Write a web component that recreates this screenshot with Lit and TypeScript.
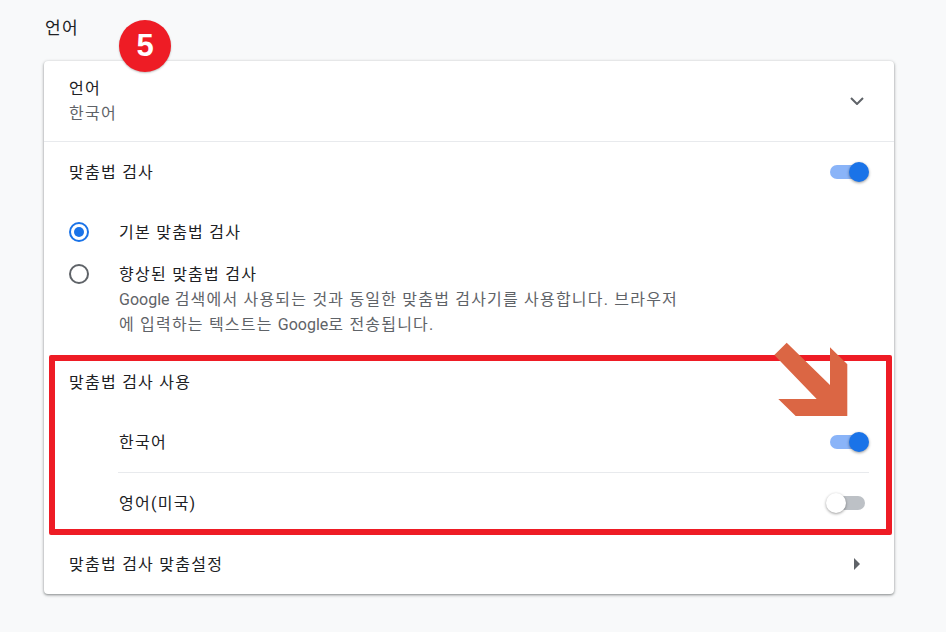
import { LitElement, html, css, svg } from 'lit';
import { customElement, property } from 'lit/decorators.js';

@customElement('fc-toggle')
class FcToggle extends LitElement {
  @property({ type: Boolean, reflect: true }) checked = false;

  static styles = css`
    :host {
      display: block;
      position: relative;
      width: 43px;
      height: 20px;
    }
    .bar {
      position: absolute;
      top: 3px;
      left: 4px;
      width: 35px;
      height: 14px;
      border-radius: 7px;
      background: #bdc1c6;
    }
    .knob {
      position: absolute;
      top: 0;
      left: 0;
      width: 20px;
      height: 20px;
      border-radius: 50%;
      background: #fff;
      box-shadow: 0 1px 3px rgba(0, 0, 0, 0.4);
    }
    :host([checked]) .bar {
      background: #8ab4f8;
    }
    :host([checked]) .knob {
      left: 23px;
      background: #1a73e8;
    }
  `;

  render() {
    return html`<div class="bar"></div><div class="knob"></div>`;
  }
}

@customElement('app-root')
class AppRoot extends LitElement {
  static styles = css`
    :host {
      display: block;
      position: relative;
      width: 946px;
      height: 632px;
      overflow: hidden;
      background: #f8f9fa;
      color: #202124;
      font-family: Roboto, 'Noto Sans CJK KR', 'Liberation Sans', sans-serif;
      font-size: 16px;
      letter-spacing: 1.25px;
    }
    .page {
      padding: 15px 52px 0 44px;
    }
    h2 {
      margin: 0 0 20px 1px;
      height: 26px;
      line-height: 26px;
      font-size: 17px;
      font-weight: 400;
    }
    .card {
      background: #fff;
      border-radius: 4px;
      box-shadow: 0 1px 2px rgba(60, 64, 67, 0.4), 0 1px 3px 1px rgba(60, 64, 67, 0.2);
    }
    .row {
      display: flex;
      align-items: center;
      justify-content: space-between;
      padding: 0 25px;
    }
    .label {
      padding-bottom: 2px;
    }
    .lang {
      height: 80px;
      border-bottom: 1px solid #e8eaed;
      padding-right: 30px;
    }
    .lang-text {
      display: flex;
      flex-direction: column;
      gap: 1px;
      line-height: 24px;
    }
    .sub {
      color: #5f6368;
    }
    .spell {
      height: 60px;
    }
    .options {
      padding: 0 25px;
      display: flex;
      flex-direction: column;
    }
    .option {
      display: flex;
      gap: 30px;
    }
    .option.basic {
      align-items: center;
      height: 60px;
    }
    .option.better {
      margin-top: -8px;
      height: 100px;
    }
    .radio {
      box-sizing: border-box;
      flex: none;
      width: 20px;
      height: 20px;
      border: 2px solid #5f6368;
      border-radius: 50%;
      display: flex;
      align-items: center;
      justify-content: center;
    }
    .radio.on {
      border-color: #1a73e8;
    }
    .radio.on::after {
      content: '';
      width: 10px;
      height: 10px;
      border-radius: 50%;
      background: #1a73e8;
    }
    .better .radio {
      margin-top: 10px;
    }
    .better-text {
      line-height: 25px;
      padding-top: 8px;
    }
    .desc {
      width: 570px;
      letter-spacing: 1.2px;
      color: #5f6368;
    }
    .latin {
      letter-spacing: 0;
    }
    .use {
      height: 54px;
      margin-bottom: 4px;
    }
    .use .label {
      padding-bottom: 0;
    }
    .lang-list {
      margin-left: 74px;
      padding-right: 25px;
    }
    .lang-item {
      display: flex;
      align-items: center;
      justify-content: space-between;
      height: 60px;
    }
    .lang-item + .lang-item {
      border-top: 1px solid #e8eaed;
    }
    .lang-item .label {
      margin-left: 1px;
    }
    .settings {
      height: 61px;
      padding-right: 34px;
    }
    .mark {
      position: absolute;
      box-sizing: border-box;
      left: 49px;
      top: 355px;
      width: 843px;
      height: 180px;
      border: 6px solid #ee1c25;
      border-radius: 2px;
    }
    .badge {
      position: absolute;
      left: 119px;
      top: 20px;
      width: 52px;
      height: 52px;
      border-radius: 50%;
      background: #ee1c25;
      box-shadow: 0 1px 2px rgba(0, 0, 0, 0.25);
      color: #fff;
      font-family: 'Liberation Sans', sans-serif;
      font-size: 31px;
      font-weight: 700;
      letter-spacing: 0;
      line-height: 52px;
      text-align: center;
    }
    .arrow {
      position: absolute;
      left: 770px;
      top: 340px;
    }
  `;

  private chevron() {
    return html`<svg width="14" height="8" viewBox="0 0 14 8">
      ${svg`<path d="M1 1l6 6 6-6" fill="none" stroke="#5f6368" stroke-width="2" />`}
    </svg>`;
  }

  private caret() {
    return html`<svg width="6" height="12" viewBox="0 0 6 12">
      ${svg`<path d="M0 0l6 6-6 6z" fill="#5f6368" />`}
    </svg>`;
  }

  render() {
    return html`
      <div class="page">
        <h2>언어</h2>
        <div class="card">
          <div class="row lang">
            <div class="lang-text">
              <span>언어</span>
              <span class="sub">한국어</span>
            </div>
            ${this.chevron()}
          </div>
          <div class="row spell">
            <span class="label">맞춤법 검사</span>
            <fc-toggle checked></fc-toggle>
          </div>
          <div class="options">
            <div class="option basic">
              <div class="radio on"></div>
              <span class="label">기본 맞춤법 검사</span>
            </div>
            <div class="option better">
              <div class="radio"></div>
              <div class="better-text">
                <div>향상된 맞춤법 검사</div>
                <div class="desc"><span class="latin">Google</span> 검색에서 사용되는 것과 동일한 맞춤법 검사기를 사용합니다. 브라우저에 입력하는 텍스트는 <span class="latin">Google</span>로 전송됩니다.</div>
              </div>
            </div>
          </div>
          <div class="row use"><span class="label">맞춤법 검사 사용</span></div>
          <div class="lang-list">
            <div class="lang-item">
              <span class="label">한국어</span>
              <fc-toggle checked></fc-toggle>
            </div>
            <div class="lang-item">
              <span class="label">영어(미국)</span>
              <fc-toggle></fc-toggle>
            </div>
          </div>
          <div class="row settings">
            <span class="label">맞춤법 검사 맞춤설정</span>
            ${this.caret()}
          </div>
        </div>
      </div>
      <div class="mark"></div>
      <svg class="arrow" width="80" height="80" viewBox="770 340 80 80">
        ${svg`<path d="M774.3 355L786.7 342.7 830 385V347.3L847.3 364.3V416H795.7L778.3 399H816.7z" fill="#db6644" />`}
      </svg>
      <div class="badge">5</div>
    `;
  }
}
